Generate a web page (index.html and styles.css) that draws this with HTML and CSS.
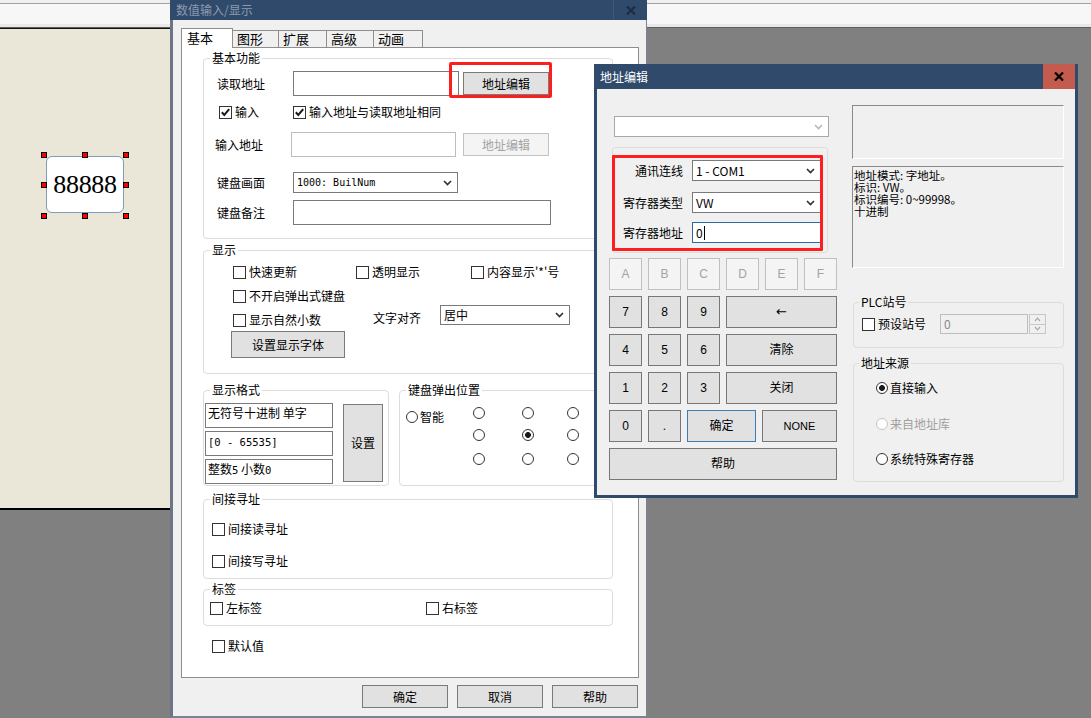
FILE: index.html
```html
<!DOCTYPE html>
<html lang="zh-CN">
<head>
<meta charset="utf-8">
<title>数值输入/显示</title>
<link rel="stylesheet" href="styles.css">
</head>
<body>
<div class="desktop">
  <div class="topbar"><div class="topbar-strip"></div></div>
  <div class="canvas">
    <div class="widget">
      <span class="widget-text">88888</span>
      <span class="h h-l h-t"></span><span class="h h-c h-t"></span><span class="h h-r h-t"></span>
      <span class="h h-l h-m"></span><span class="h h-r h-m"></span>
      <span class="h h-l h-b"></span><span class="h h-c h-b"></span><span class="h h-r h-b"></span>
    </div>
  </div>

  <section class="win win-main">
    <header class="title title-inactive">
      <span class="title-text">数值输入/显示</span>
      <span class="close-inactive"><svg width="10" height="9" viewBox="0 0 10 9"><path d="M1 0.5 L9 8.5 M9 0.5 L1 8.5" stroke="#1d2c40" stroke-width="2.2" fill="none"/></svg></span>
    </header>
    <div class="main-body">
      <div class="tabs">
        <span class="tab tab-active t1">基本</span>
        <span class="tab t2">图形</span>
        <span class="tab t3">扩展</span>
        <span class="tab t4">高级</span>
        <span class="tab t5">动画</span>
      </div>
      <div class="panel">
        <fieldset class="grp pgrp g-basic">
          <legend>基本功能</legend>
          <div class="frow b-r1">
            <span class="lbl">读取地址</span>
            <div class="field f-read"></div>
            <span class="anno">
              <span class="btn b86">地址编辑</span>
              <span class="redbox rb-main"></span>
            </span>
          </div>
          <div class="frow b-r2">
            <label class="chk chk-in"><span class="cb"><svg width="11" height="11" viewBox="0 0 11 11"><path d="M1.8 5.3 L4.3 8 L9.2 2.2" stroke="#1a1a1a" stroke-width="2" fill="none"/></svg></span>输入</label>
            <label class="chk"><span class="cb"><svg width="11" height="11" viewBox="0 0 11 11"><path d="M1.8 5.3 L4.3 8 L9.2 2.2" stroke="#1a1a1a" stroke-width="2" fill="none"/></svg></span>输入地址与读取地址相同</label>
          </div>
          <div class="frow b-r3">
            <span class="lbl">输入地址</span>
            <div class="field field-dis f-in"></div>
            <span class="btn btn-dis b86 b-in">地址编辑</span>
          </div>
          <div class="frow b-r4">
            <span class="lbl">键盘画面</span>
            <div class="sel sel-kb"><span class="mono">1000: BuilNum</span><svg class="chev" width="9" height="6" viewBox="0 0 9 6"><path d="M1 1 L4.5 4.5 L8 1" stroke="#333" stroke-width="1.7" fill="none"/></svg></div>
          </div>
          <div class="frow b-r5">
            <span class="lbl">键盘备注</span>
            <div class="field f-note"></div>
          </div>
        </fieldset>

        <fieldset class="grp pgrp g-disp">
          <legend>显示</legend>
          <div class="d-r1">
            <label class="chk"><span class="cb"></span>快速更新</label>
            <label class="chk"><span class="cb"></span>透明显示</label>
            <label class="chk"><span class="cb"></span>内容显示'*'号</label>
          </div>
          <div class="frow d-r2">
            <label class="chk"><span class="cb"></span>不开启弹出式键盘</label>
          </div>
          <div class="d-r3">
            <label class="chk chk-nat"><span class="cb"></span>显示自然小数</label>
            <span class="lbl-align">文字对齐</span>
            <div class="sel sel-align"><span>居中</span><svg class="chev" width="9" height="6" viewBox="0 0 9 6"><path d="M1 1 L4.5 4.5 L8 1" stroke="#333" stroke-width="1.7" fill="none"/></svg></div>
          </div>
          <span class="btn d-btn">设置显示字体</span>
        </fieldset>

        <div class="fmt-row">
          <fieldset class="grp g-fmt">
            <legend>显示格式</legend>
            <div class="fmt-inner">
              <div class="fmt-boxes">
                <div class="fmt-box">无符号十进制 单字</div>
                <div class="fmt-box"><span class="mono">[0 - 65535]</span></div>
                <div class="fmt-box">整数<span class="mono">5</span> 小数<span class="mono">0</span></div>
              </div>
              <span class="btn fmt-btn">设置</span>
            </div>
          </fieldset>
          <fieldset class="grp g-kb">
            <legend>键盘弹出位置</legend>
            <div class="kb-inner">
              <label class="rad rad-smart"><span class="rd"></span>智能</label>
              <div class="kb-grid">
                <span class="rd"></span><span class="rd"></span><span class="rd"></span>
                <span class="rd"></span><span class="rd on"></span><span class="rd"></span>
                <span class="rd"></span><span class="rd"></span><span class="rd"></span>
              </div>
            </div>
          </fieldset>
        </div>

        <fieldset class="grp pgrp g-ind">
          <legend>间接寻址</legend>
          <div class="frow ind-r1"><label class="chk"><span class="cb"></span>间接读寻址</label></div>
          <div class="frow ind-r2"><label class="chk"><span class="cb"></span>间接写寻址</label></div>
        </fieldset>

        <fieldset class="grp pgrp g-tag">
          <legend>标签</legend>
          <div class="frow tag-r">
            <label class="chk chk-left"><span class="cb"></span>左标签</label>
            <label class="chk"><span class="cb"></span>右标签</label>
          </div>
        </fieldset>

        <div class="frow def-r"><label class="chk"><span class="cb"></span>默认值</label></div>
      </div>
      <div class="dlg-btns">
        <span class="btn b86">确定</span>
        <span class="btn b86">取消</span>
        <span class="btn b86">帮助</span>
      </div>
    </div>
  </section>

  <section class="win win-addr">
    <header class="title title-active">
      <span class="title-text">地址编辑</span>
      <span class="close-red"><svg width="10" height="9" viewBox="0 0 10 9"><path d="M1 0.5 L9 8.5 M9 0.5 L1 8.5" stroke="#000" stroke-width="2.2" fill="none"/></svg></span>
    </header>
    <div class="addr-body">
      <div class="addr-left">
        <div class="sel sel-plain"><span></span><svg class="chev" width="9" height="6" viewBox="0 0 9 6"><path d="M1 1 L4.5 4.5 L8 1" stroke="#b8b8b8" stroke-width="1.6" fill="none"/></svg></div>
        <div class="conn-grp">
          <div class="crow"><span class="clbl">通讯连线</span><div class="sel csel"><span>1 - COM1</span><svg class="chev" width="9" height="6" viewBox="0 0 9 6"><path d="M1 1 L4.5 4.5 L8 1" stroke="#333" stroke-width="1.7" fill="none"/></svg></div></div>
          <div class="crow"><span class="clbl">寄存器类型</span><div class="sel csel"><span>VW</span><svg class="chev" width="9" height="6" viewBox="0 0 9 6"><path d="M1 1 L4.5 4.5 L8 1" stroke="#333" stroke-width="1.7" fill="none"/></svg></div></div>
          <div class="crow"><span class="clbl">寄存器地址</span><div class="field cfield">0<span class="caret"></span></div></div>
          <span class="redbox rb-addr"></span>
        </div>
        <div class="keypad">
          <span class="key key-dis">A</span><span class="key key-dis">B</span><span class="key key-dis">C</span><span class="key key-dis">D</span><span class="key key-dis">E</span><span class="key key-dis">F</span>
          <span class="key">7</span><span class="key">8</span><span class="key">9</span><span class="key key-wide key-arrow">←</span>
          <span class="key">4</span><span class="key">5</span><span class="key">6</span><span class="key key-wide">清除</span>
          <span class="key">1</span><span class="key">2</span><span class="key">3</span><span class="key key-wide">关闭</span>
          <span class="key">0</span><span class="key">.</span>
          <div class="key-pair"><span class="key key-ok">确定</span><span class="key key-none">NONE</span></div>
          <span class="key key-full">帮助</span>
        </div>
      </div>
      <div class="addr-right">
        <div class="sunk s1"></div>
        <div class="sunk s2">
          <div>地址模式: 字地址。</div>
          <div>标识: VW。</div>
          <div>标识编号: 0~99998。</div>
          <div>十进制</div>
        </div>
        <fieldset class="grp g-plc">
          <legend>PLC站号</legend>
          <div class="plc-row">
            <label class="chk chk-plc"><span class="cb"></span>预设站号</label>
            <span class="spin-field">0</span>
            <span class="spin">
              <span class="spin-btn"><svg width="7" height="5" viewBox="0 0 7 5"><path d="M1 4 L3.5 1.2 L6 4" stroke="#a8a8a8" stroke-width="1.2" fill="none"/></svg></span>
              <span class="spin-btn"><svg width="7" height="5" viewBox="0 0 7 5"><path d="M1 1 L3.5 3.8 L6 1" stroke="#a8a8a8" stroke-width="1.2" fill="none"/></svg></span>
            </span>
          </div>
        </fieldset>
        <fieldset class="grp g-src">
          <legend>地址来源</legend>
          <div class="src-row sr1"><label class="rad"><span class="rd on"></span>直接输入</label></div>
          <div class="src-row sr2"><label class="rad rad-dis"><span class="rd"></span>来自地址库</label></div>
          <div class="src-row sr3"><label class="rad"><span class="rd"></span>系统特殊寄存器</label></div>
        </fieldset>
      </div>
    </div>
  </section>
</div>
</body>
</html>
```

FILE: styles.css
```css
* { box-sizing: border-box; }
html, body { margin: 0; padding: 0; }
body {
  width: 1091px;
  height: 718px;
  overflow: hidden;
  background: #808080;
  font-family: "Noto Sans CJK SC", "Liberation Sans", sans-serif;
  font-size: 12px;
  color: #000;
}
.desktop { position: relative; width: 1091px; height: 718px; }

/* group boxes (base rule first, class-only specificity) */
.grp {
  margin: 0;
  padding: 0;
  min-width: 0;
  border: 1px solid #dcdcdc;
  border-radius: 4px;
}
.grp > legend {
  padding: 0 2px;
  margin-left: 6px;
  height: 14px;
  line-height: 14px;
  font-size: 12px;
}

/* top strip */
.topbar { height: 28px; background: #efefef; padding-top: 3px; border-bottom: 1px solid #5e5e5e; }
.topbar-strip { height: 24px; background: #f7f7f7; border-top: 1px solid #a3a3a3; border-bottom: 3px solid #e9e9e9; }

/* drawing canvas */
.canvas {
  position: relative;
  width: 176px;
  height: 482px;
  background: #ebe7d8;
  border-top: 1px solid #111;
  border-bottom: 2px solid #000;
}
.widget {
  position: absolute;
  left: 46px;
  top: 127px;
  width: 78px;
  height: 57px;
  background: #fff;
  border: 1px solid #7f9db9;
  border-radius: 6px;
  display: flex;
  align-items: center;
  justify-content: center;
}
.widget-text { font-family: "Liberation Serif", serif; font-size: 26px; line-height: 26px; letter-spacing: -0.3px; }
.h { position: absolute; width: 6px; height: 6px; background: #ff0000; border: 1px solid #000; }
.h-l { left: -6px; }
.h-c { left: 35px; }
.h-r { left: 76px; }
.h-t { top: -5px; }
.h-m { top: 25px; }
.h-b { top: 56px; }

/* windows */
.win { position: absolute; display: flex; flex-direction: column; }
.title { display: flex; align-items: center; justify-content: space-between; background: #2f4a6b; flex: none; }
.title-text { padding-left: 6px; line-height: 14px; }

.win-main { left: 170px; top: 0; width: 477px; height: 718px; }
.title-inactive { height: 20px; }
.title-inactive .title-text { color: #8c9bb0; }
.close-inactive {
  width: 34px;
  height: 20px;
  border-left: 1px solid #3e5878;
  display: flex;
  align-items: center;
  justify-content: center;
}
.main-body {
  flex: 1;
  background: #f0f0f0;
  border-left: 3px solid #6c7586;
  border-right: 1px solid #7a8394;
  border-bottom: 2px solid #7a8394;
  padding: 8px 7px 0 8px;
}

/* tabs */
.tabs { display: flex; align-items: flex-end; height: 19px; }
.tab {
  height: 17px;
  border: 1px solid #8e8e8e;
  border-bottom: none;
  background: #f0f0f0;
  font-size: 13px;
  line-height: 15px;
  padding-left: 4px;
  margin-left: -1px;
}
.tab-active {
  position: relative;
  z-index: 1;
  height: 20px;
  margin-bottom: -1px;
  margin-left: 0;
  background: #fff;
  padding-left: 5px;
  padding-top: 1px;
}
.t1 { width: 52px; }
.t2 { width: 47px; }
.t3 { width: 49px; }
.t4 { width: 48px; }
.t5 { width: 50px; }

.panel {
  width: 458px;
  height: 631px;
  background: #fff;
  border: 1px solid #8e8e8e;
  padding-top: 3px;
}
.pgrp { margin-left: 21px; width: 410px; }

.frow { display: flex; align-items: center; }
.lbl { width: 76px; flex: none; line-height: 16px; }

.field { background: #fff; border: 1px solid #7a7a7a; flex: none; }
.field-dis { border-color: #bdbdbd; }

.btn {
  display: inline-flex;
  align-items: center;
  justify-content: center;
  height: 23px;
  background: #e1e1e1;
  border: 1px solid #7a7a7a;
  flex: none;
  line-height: 14px;
}
.btn-dis { background: #f4f4f4; border-color: #c2c2c2; color: #a3a3a3; }
.b86 { width: 86px; }

.anno { position: relative; display: inline-flex; margin-left: 4px; }
.redbox { position: absolute; border: 3px solid #ff1e1e; border-radius: 2px; }
.rb-main { left: -14px; top: -10px; width: 103px; height: 36px; }

.sel {
  display: flex;
  align-items: center;
  justify-content: space-between;
  background: #fff;
  border: 1px solid #7a7a7a;
  padding: 0 5px 0 3px;
  flex: none;
  line-height: 14px;
}
.mono { font-family: "DejaVu Sans Mono", "Liberation Mono", monospace; font-size: 10px; }

/* basic group rows */
.g-basic { padding-bottom: 13px; }
.b-r1 { margin-top: 6px; height: 25px; padding-left: 13px; }
.f-read { width: 166px; height: 25px; }
.b-r2 { margin-top: 8px; height: 16px; padding-left: 15px; }
.chk-in { width: 74px; }
.b-r3 { margin-top: 12px; height: 25px; padding-left: 11px; }
.f-in { width: 165px; height: 25px; }
.b-in { margin-left: 7px; }
.b-r4 { margin-top: 15px; height: 21px; padding-left: 13px; }
.sel-kb { width: 165px; height: 21px; }
.b-r5 { margin-top: 7px; height: 25px; padding-left: 13px; }
.f-note { width: 258px; height: 25px; }

/* checkbox & radio */
.chk { display: inline-flex; align-items: center; height: 16px; line-height: 16px; white-space: nowrap; }
.cb {
  width: 13px;
  height: 13px;
  border: 1px solid #333;
  background: #fff;
  margin-right: 3px;
  flex: none;
  display: flex;
}
.rad { display: inline-flex; align-items: center; height: 16px; line-height: 16px; white-space: nowrap; }
.rd {
  width: 12px;
  height: 12px;
  border: 1px solid #333;
  border-radius: 50%;
  background: #fff;
  flex: none;
}
.rd.on { background: radial-gradient(circle, #1a1a1a 0 2.6px, #fff 3.2px); }
.rad .rd { margin-right: 2px; }
.rad-dis { color: #a0a0a0; }
.rad-dis .rd { border-color: #c4c4c4; }

/* display group */
.g-disp { margin-top: 4px; padding-bottom: 15px; }
.d-r1 { display: grid; grid-template-columns: 123px 115px auto; margin-top: 7px; height: 16px; padding-left: 29px; }
.d-r2 { margin-top: 8px; height: 16px; padding-left: 29px; }
.d-r3 { display: flex; align-items: flex-start; margin-top: 1px; padding-left: 29px; }
.chk-nat { width: 140px; margin-top: 7px; }
.lbl-align { width: 67px; margin-top: 5px; line-height: 16px; }
.sel-align { width: 130px; height: 20px; }
.d-btn { margin-top: 3px; margin-left: 27px; width: 114px; height: 27px; display: flex; }

/* format + keyboard position */
.fmt-row { display: flex; margin-top: 9px; margin-left: 21px; gap: 10px; }
.g-fmt { width: 186px; height: 103px; }
.fmt-inner { display: flex; align-items: flex-start; margin-top: 6px; padding-left: 1px; }
.fmt-boxes { display: flex; flex-direction: column; gap: 3px; }
.fmt-box {
  width: 128px;
  height: 25px;
  border: 1px solid #7a7a7a;
  background: #fff;
  padding: 1px 0 0 2px;
  line-height: 16px;
  white-space: nowrap;
}
.fmt-box .mono { font-size: 10.5px; }
.fmt-btn { margin-left: 10px; margin-top: 1px; width: 40px; height: 78px; }

.g-kb { width: 214px; height: 103px; }
.kb-inner { display: flex; align-items: flex-start; padding-left: 6px; }
.rad-smart { width: 67px; margin-top: 12px; }
.kb-grid {
  display: grid;
  grid-template-columns: 49px 45px 12px;
  grid-template-rows: 22px 24px 12px;
  margin-top: 10px;
}

/* indirect */
.g-ind { margin-top: 6px; padding-bottom: 9px; }
.ind-r1 { margin-top: 15px; height: 16px; padding-left: 8px; }
.ind-r2 { margin-top: 16px; height: 16px; padding-left: 8px; }

/* labels */
.g-tag { margin-top: 3px; padding-bottom: 9px; }
.tag-r { margin-top: 4px; height: 16px; padding-left: 6px; }
.chk-left { width: 216px; }

.def-r { margin-top: 12px; height: 16px; padding-left: 30px; }

.dlg-btns { display: flex; justify-content: flex-end; gap: 9px; margin-top: 7px; padding-right: 1px; }

/* address edit window */
.win-addr { left: 594px; top: 64px; width: 484px; height: 434px; }
.title-active { height: 25px; }
.title-active .title-text { color: #fff; padding-left: 6px; }
.close-red {
  width: 32px;
  height: 25px;
  margin-right: 3px;
  background: #c35b4f;
  display: flex;
  align-items: center;
  justify-content: center;
}
.addr-body {
  flex: 1;
  display: flex;
  align-items: flex-start;
  gap: 15px;
  background: #f0f0f0;
  border: 3px solid #2f4a6b;
  border-top: 0;
  padding-left: 12px;
}
.addr-left { width: 228px; padding-top: 27px; flex: none; }
.sel-plain { margin-left: 5px; width: 215px; height: 21px; border-color: #a8a8a8; }
.conn-grp {
  position: relative;
  margin-top: 10px;
  margin-left: 3px;
  width: 216px;
  height: 106px;
  border: 1px solid #dcdcdc;
  border-radius: 3px;
  padding-top: 12px;
}
.crow { display: flex; align-items: center; height: 21px; }
.crow:nth-child(2) { margin-top: 11px; }
.crow:nth-child(3) { margin-top: 9px; }
.clbl { width: 70px; text-align: right; margin-right: 9px; line-height: 16px; white-space: nowrap; }
.csel { width: 129px; height: 21px; }
.cfield {
  width: 129px;
  height: 21px;
  border-color: #2b6aa5;
  display: flex;
  align-items: center;
  padding-left: 3px;
  line-height: 14px;
}
.caret { display: inline-block; width: 1px; height: 14px; background: #000; margin-left: 1px; }
.rb-addr { left: -1px; top: 7px; width: 211px; height: 96px; border-radius: 1px; }

.keypad {
  display: grid;
  grid-template-columns: repeat(6, 33px);
  grid-auto-rows: 32px;
  column-gap: 6px;
  row-gap: 6px;
  margin-top: 5px;
}
.key {
  display: flex;
  align-items: center;
  justify-content: center;
  background: #e1e1e1;
  border: 1px solid #777;
  font-family: "Liberation Sans", "Noto Sans CJK SC", sans-serif;
  font-size: 12px;
  line-height: 14px;
}
.key-dis { background: #f4f4f4; border-color: #c0c0c0; color: #a3a3a3; }
.key-wide { grid-column: span 3; }
.key-arrow { font-family: "DejaVu Sans", sans-serif; font-size: 13px; }
.key-pair { grid-column: 3 / 7; display: flex; gap: 6px; }
.key-ok { width: 69px; border-color: #3b7db5; }
.key-none { width: 75px; font-size: 11px; }
.key-full { grid-column: 1 / 7; }

.addr-right { width: 212px; padding-top: 16px; flex: none; }
.sunk { border: 1px solid; border-color: #8a8a8a #ffffff #ffffff #8a8a8a; background: #f0f0f0; }
.s1 { height: 54px; }
.s2 { margin-top: 7px; height: 102px; padding: 2px 1px; line-height: 12px; font-size: 11.5px; white-space: nowrap; }
.s2 > div { height: 12px; line-height: 12px; }
.g-plc { margin-top: 27px; margin-left: 1px; width: 211px; padding-bottom: 13px; }
.g-plc > legend, .g-src > legend { margin-left: 5px; }
.plc-row { display: flex; align-items: center; margin-top: 5px; height: 20px; padding-left: 8px; }
.chk-plc { width: 78px; }
.spin-field {
  width: 88px;
  height: 20px;
  border: 1px solid #bdbdbd;
  background: #f0f0f0;
  color: #8a8a8a;
  padding-left: 3px;
  line-height: 18px;
}
.spin { display: flex; flex-direction: column; margin-left: 1px; width: 17px; height: 20px; }
.spin-btn {
  flex: 1;
  border: 1px solid #c8c8c8;
  display: flex;
  align-items: center;
  justify-content: center;
  background: #f0f0f0;
}
.spin-btn + .spin-btn { border-top: 0; }
.g-src { margin-top: 8px; margin-left: 1px; width: 211px; padding-bottom: 14px; }
.src-row { height: 16px; padding-left: 22px; }
.sr1 { margin-top: 10px; }
.sr2 { margin-top: 20px; }
.sr3 { margin-top: 19px; }
```
